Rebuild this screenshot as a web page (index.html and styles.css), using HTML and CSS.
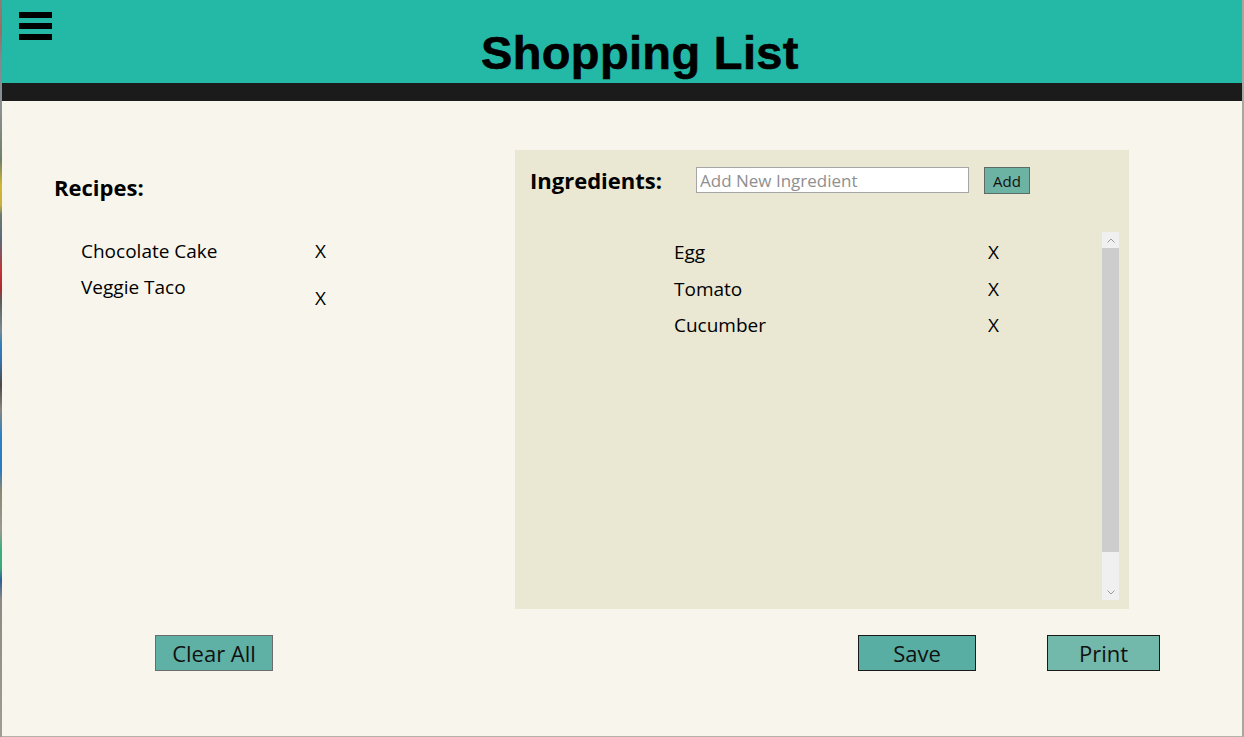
FILE: index.html
```html
<!DOCTYPE html>
<html lang="en">
<head>
<meta charset="utf-8">
<title>Shopping List</title>
<link rel="stylesheet" href="styles.css">
</head>
<body>
<div class="window">
  <div class="desk-edge"></div>
  <div class="app">
    <header class="topbar">
      <button class="menu" aria-label="Menu"><span></span><span></span><span></span></button>
      <h1 class="title">Shopping List</h1>
    </header>
    <div class="darkbar"></div>
    <main class="content">
      <section class="recipes">
        <h2 class="label">Recipes:</h2>
        <ul class="recipe-list">
          <li class="row"><span class="name">Chocolate Cake</span><span class="del">X</span></li>
          <li class="row"><span class="name">Veggie Taco</span><span class="del del-low">X</span></li>
        </ul>
      </section>
      <section class="ingredients">
        <div class="ing-head">
          <h2 class="label ing-label">Ingredients:</h2>
          <input class="ing-input" type="text" placeholder="Add New Ingredient">
          <button class="add-btn">Add</button>
        </div>
        <div class="ing-body">
          <ul class="ing-list">
            <li class="row"><span class="name ing-name">Egg</span><span class="del">X</span></li>
            <li class="row"><span class="name ing-name">Tomato</span><span class="del">X</span></li>
            <li class="row"><span class="name ing-name">Cucumber</span><span class="del">X</span></li>
          </ul>
          <div class="scrollbar">
            <div class="sb-arrow sb-up"><svg width="8" height="5" viewBox="0 0 8 5"><polyline points="0.5,4.5 4,1 7.5,4.5" fill="none" stroke="#9a9a9a" stroke-width="1"/></svg></div>
            <div class="sb-thumb"></div>
            <div class="sb-arrow sb-down"><svg width="8" height="5" viewBox="0 0 8 5"><polyline points="0.5,0.5 4,4 7.5,0.5" fill="none" stroke="#9a9a9a" stroke-width="1"/></svg></div>
          </div>
        </div>
      </section>
    </main>
    <footer class="actions">
      <button class="btn btn-clear">Clear All</button>
      <button class="btn btn-save">Save</button>
      <button class="btn btn-print">Print</button>
    </footer>
  </div>
</div>
</body>
</html>
```

FILE: styles.css
```css
html, body {
  margin: 0;
  padding: 0;
  background: #f8f6ec;
}

.window {
  display: flex;
  width: 1244px;
  height: 737px;
  overflow: hidden;
  font-family: "Open Sans", "Noto Sans", sans-serif;
  color: #000;
}

.desk-edge {
  flex: 0 0 2px;
  background: linear-gradient(to bottom,
    #8c7f78 0px, #a06a64 30px, #7d8b92 60px, #8d8f90 110px,
    #6f7f6a 160px, #d0b830 185px, #c9b040 205px, #6d7a70 215px,
    #5a6a7a 240px, #c0343a 270px, #b02a30 288px, #5c5c58 300px,
    #7a8a92 330px, #2f7fbf 345px, #3a6fa8 362px, #4c4a48 385px,
    #8a8680 410px, #2c82c6 435px, #2a7ac0 470px, #8b8776 490px,
    #9a9a90 530px, #3faf7f 548px, #3ca878 568px, #2f5f9a 580px,
    #8c8a84 600px, #a09c96 737px);
}

.app {
  flex: 1;
  display: flex;
  flex-direction: column;
  border-right: 2px solid #a9a6a0;
  border-bottom: 1px solid #b5b2ab;
  background: #f8f6ec;
}

/* Header */
.topbar {
  display: flex;
  align-items: flex-start;
  height: 83px;
  background: #24b9a6;
}

.menu {
  display: flex;
  flex-direction: column;
  gap: 5.5px;
  margin: 12px 0 0 17px;
  padding: 0;
  border: 0;
  background: transparent;
}

.menu span {
  display: block;
  width: 33px;
  height: 5.5px;
  background: #000;
}

.title {
  margin: 29px 0 0 429px;
  font-family: "Liberation Sans", Arial, sans-serif;
  font-weight: 700;
  font-size: 47px;
  line-height: 47px;
  letter-spacing: 0.35px;
  -webkit-text-stroke: 0.6px #000;
}

.darkbar {
  height: 18px;
  background: #1b1b1b;
}

/* Content */
.content {
  display: flex;
  align-items: flex-start;
  margin-top: 49px;
}

.recipes {
  flex: 0 0 513px;
  box-sizing: border-box;
  padding: 25px 0 0 52px;
}

.label {
  margin: 0;
  font-size: 22px;
  line-height: 24px;
  font-weight: 700;
}

ul {
  list-style: none;
  margin: 0;
  padding: 0;
}

.recipe-list {
  margin-top: 34px;
  padding-left: 27px;
}

.row {
  display: flex;
  align-items: flex-start;
  font-size: 19px;
  line-height: 36px;
}

.name {
  flex: 0 0 234px;
}

.del-low {
  margin-top: 11px;
}

/* Ingredients panel */
.ingredients {
  flex: 0 0 614px;
  height: 459px;
  box-sizing: border-box;
  padding: 17px 10px 9px 15px;
  background: #eae7d3;
  display: flex;
  flex-direction: column;
}

.ing-head {
  display: flex;
  align-items: center;
  height: 27px;
}

.ing-label {
  flex: 0 0 166px;
  margin-top: -2px;
}

.ing-input {
  box-sizing: border-box;
  width: 273px;
  height: 26px;
  margin: 0 0 1px 0;
  padding: 0 3px;
  border: 1px solid #a6a6a6;
  background: #fff;
  font-family: "Open Sans", "Noto Sans", sans-serif;
  font-size: 17px;
  color: #000;
  outline: none;
}

.ing-input::placeholder {
  color: #8f8f8f;
}

.add-btn {
  box-sizing: border-box;
  width: 46px;
  height: 27px;
  margin-left: 15px;
  padding: 0;
  border: 1px solid #5d6b66;
  background: #6db3a3;
  font-family: "Open Sans", "Noto Sans", sans-serif;
  font-size: 15px;
  color: #111;
}

.ing-body {
  display: flex;
  margin-top: 38px;
  height: 368px;
}

.ing-list {
  flex: 1;
  padding: 2px 0 0 144px;
}

.ing-list .row {
  line-height: 36.5px;
}

.ing-name {
  flex: 0 0 314px;
}

.scrollbar {
  flex: 0 0 17px;
  display: flex;
  flex-direction: column;
  background: #f0f0f0;
}

.sb-arrow {
  display: flex;
  justify-content: center;
  align-items: center;
}

.sb-up {
  height: 16px;
}

.sb-thumb {
  height: 304px;
  background: #cdcdcd;
}

.sb-down {
  flex: 1;
  align-items: flex-end;
  padding-bottom: 5px;
}

/* Footer buttons */
.actions {
  display: flex;
  margin-top: 26px;
}

.btn {
  box-sizing: border-box;
  height: 36px;
  padding: 0;
  font-family: "Open Sans", "Noto Sans", sans-serif;
  font-size: 22px;
  line-height: 34px;
  color: #111;
}

.btn-clear {
  width: 118px;
  margin-left: 153px;
  background: #5fb0a5;
  border: 1px solid #6c6c6c;
}

.btn-save {
  width: 118px;
  margin-left: 585px;
  background: #58aea2;
  border: 1px solid #1a1a1a;
}

.btn-print {
  width: 113px;
  margin-left: 71px;
  background: #72b8ab;
  border: 1px solid #1a1a1a;
}
```
